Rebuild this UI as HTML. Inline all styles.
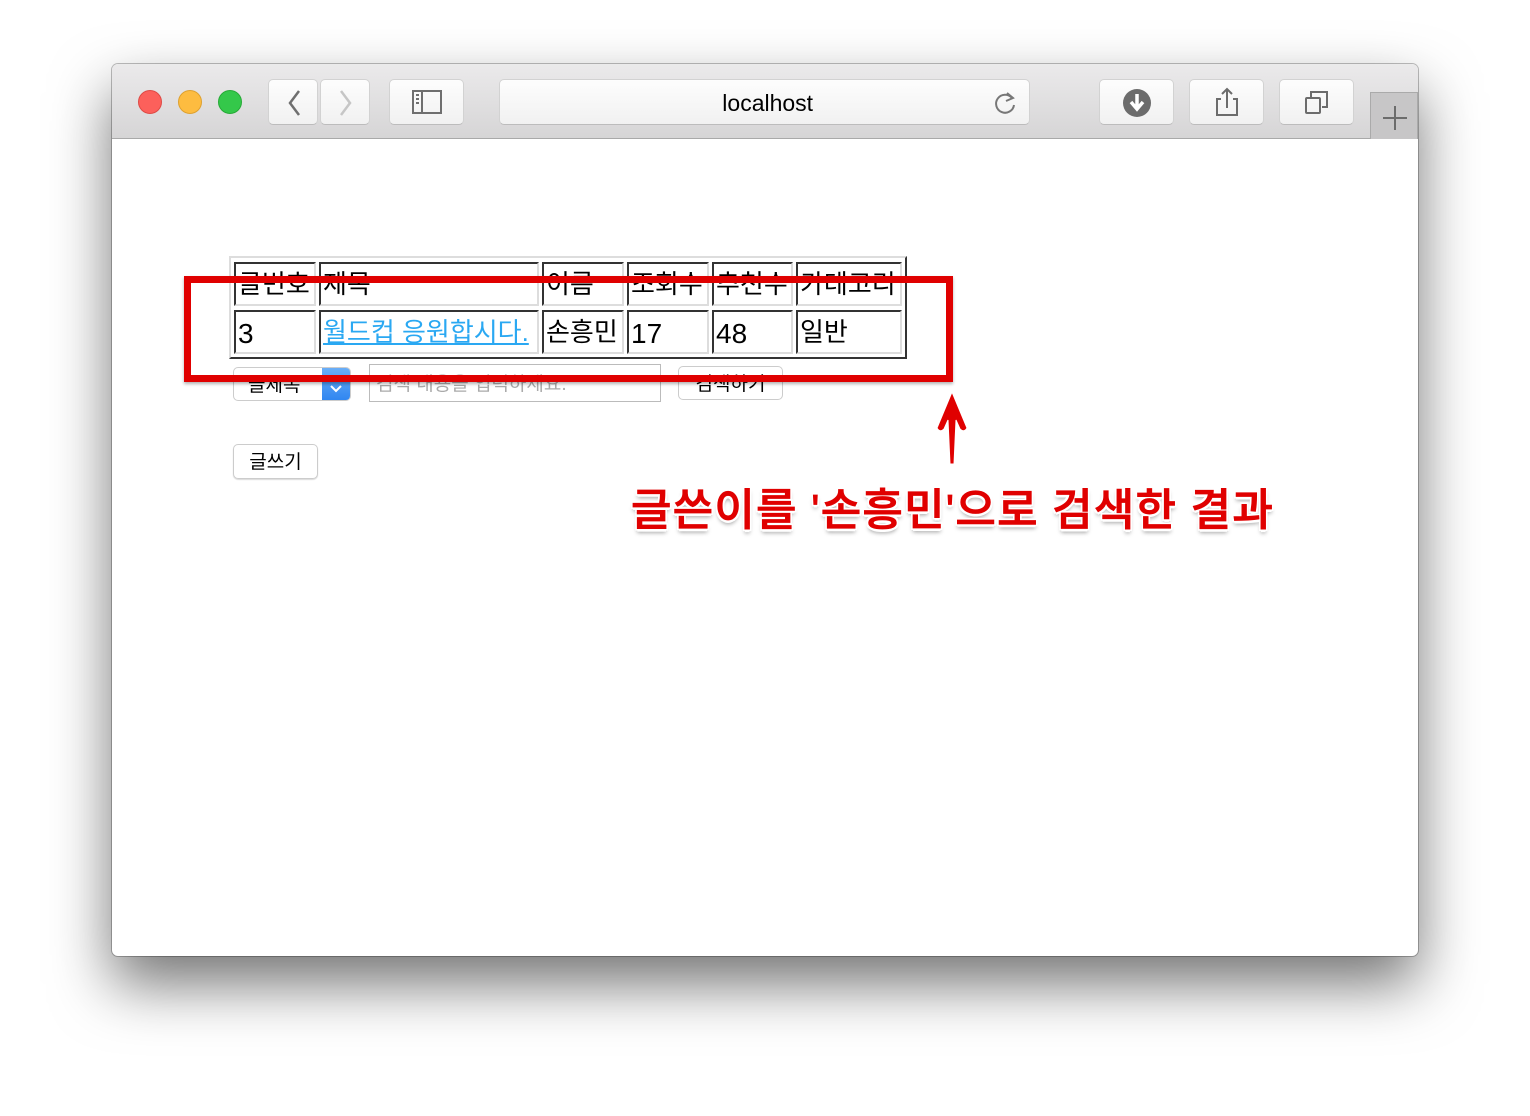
<!DOCTYPE html>
<html><head><meta charset="utf-8"><style>
*{margin:0;padding:0;box-sizing:border-box}
body{width:1530px;height:1116px;background:#fff;position:relative;overflow:hidden;font-family:"Liberation Sans","Noto Sans CJK KR",sans-serif}
.win{position:absolute;left:112px;top:64px;width:1306px;height:892px;background:#fff;border-radius:6px;box-shadow:0 28px 60px rgba(0,0,0,.55),0 0 0 1px rgba(0,0,0,.25);overflow:hidden}
.bar{position:absolute;left:0;top:0;width:100%;height:75px;background:linear-gradient(#ebeaeb,#d6d5d6);border-bottom:1px solid #a9a9a9}
.a{position:absolute}
.dot{position:absolute;top:26px;width:24px;height:24px;border-radius:50%}
.btn{position:absolute;top:15px;height:46px;background:linear-gradient(#fdfdfd,#f1f1f1);border:1px solid #d2d2d2;border-bottom-color:#bcbcbc;border-radius:5px}
.c{position:absolute;border:2px solid #333;border-right-color:#ddd;border-bottom-color:#ddd;font-size:26px;line-height:40px;padding-left:2px;color:#000;white-space:nowrap;overflow:hidden}
.c2{line-height:44px;font-size:28px}
</style></head><body>
<div class="win">
 <div class="bar">
  <div class="dot" style="left:26px;background:#fc605b;border:1px solid #de4a45"></div>
  <div class="dot" style="left:66px;background:#fdbc40;border:1px solid #dea12f"></div>
  <div class="dot" style="left:106px;background:#34c84a;border:1px solid #27aa37"></div>
  <div class="btn" style="left:156px;width:50px"><svg width="50" height="46"><path d="M30 11 L21 23 L30 35" stroke="#6f6f6f" stroke-width="2.5" fill="none"/></svg></div>
  <div class="btn" style="left:208px;width:50px"><svg width="50" height="46"><path d="M20 11 L29 23 L20 35" stroke="#c6c6c6" stroke-width="2.5" fill="none"/></svg></div>
  <div class="btn" style="left:277px;width:75px"><svg width="75" height="46"><rect x="23" y="11" width="28" height="22" stroke="#6f6f6f" stroke-width="2" fill="none"/><line x1="32" y1="11" x2="32" y2="33" stroke="#6f6f6f" stroke-width="2"/><path d="M26 15h3M26 19h3M26 23h3" stroke="#6f6f6f" stroke-width="2"/></svg></div>
  <div class="btn" style="left:387px;width:531px;font-size:23px;text-align:center;line-height:46px;color:#000">&nbsp;localhost
   <svg class="a" style="right:10px;top:9px" width="28" height="28"><path d="M21 9 A9 9 0 1 0 23 16" stroke="#777" stroke-width="2" fill="none"/><path d="M16 4 L22 9 L15 12" stroke="#777" stroke-width="2" fill="none"/></svg></div>
  <div class="btn" style="left:987px;width:75px"><svg width="75" height="46"><circle cx="37" cy="23" r="14" fill="#6c6c6c"/><path d="M37 14v14M31 22l6 7 6-7" stroke="#fff" stroke-width="3.5" fill="none"/></svg></div>
  <div class="btn" style="left:1077px;width:75px"><svg width="75" height="46"><path d="M31 19h-4v16h20v-16h-4" stroke="#6c6c6c" stroke-width="2" fill="none"/><path d="M37 28V9M32 14l5-5 5 5" stroke="#6c6c6c" stroke-width="2" fill="none"/></svg></div>
  <div class="btn" style="left:1167px;width:75px"><svg width="75" height="46"><rect x="26" y="18" width="14" height="15" stroke="#6c6c6c" stroke-width="2" fill="none" rx="1"/><path d="M31 17v-5h16v15h-5" stroke="#6c6c6c" stroke-width="2" fill="none"/></svg></div>
  <div class="a" style="left:1258px;top:28px;width:48px;height:47px;background:#c7c6c7;border:1px solid #aaa;border-bottom:none"><svg width="48" height="47"><path d="M24 13v24M12 25h24" stroke="#6c6c6c" stroke-width="2"/></svg></div>
 </div>
</div>
<!-- table -->
<div class="a" style="left:229px;top:256px;width:678px;height:103px;border:2px solid #ddd;border-right-color:#333;border-bottom-color:#333"></div>
<div class="c" style="left:234px;top:262px;width:82px;height:44px">글번호</div>
<div class="c" style="left:319px;top:262px;width:220px;height:44px">제목</div>
<div class="c" style="left:542px;top:262px;width:82px;height:44px">이름</div>
<div class="c" style="left:627px;top:262px;width:82px;height:44px">조회수</div>
<div class="c" style="left:712px;top:262px;width:81px;height:44px">추천수</div>
<div class="c" style="left:796px;top:262px;width:106px;height:44px">카테고리</div>
<div class="c c2" style="left:234px;top:310px;width:82px;height:44px">3</div>
<div class="c" style="left:319px;top:310px;width:220px;height:44px;color:#2aa8f2;text-decoration:underline">월드컵 응원합시다.</div>
<div class="c" style="left:542px;top:310px;width:82px;height:44px">손흥민</div>
<div class="c c2" style="left:627px;top:310px;width:82px;height:44px">17</div>
<div class="c c2" style="left:712px;top:310px;width:81px;height:44px">48</div>
<div class="c" style="left:796px;top:310px;width:106px;height:44px">일반</div>
<!-- form -->
<div class="a" style="left:233px;top:367px;width:118px;height:34px;border:1px solid #ccc;border-radius:5px;background:#fff;font-size:19px;line-height:36px;padding-left:14px;overflow:hidden">글제목
 <div class="a" style="right:0;top:0;width:28px;height:34px;background:linear-gradient(#6aaef7,#2d84f0)"><svg width="28" height="34"><path d="M9 18l5 5 5-5" stroke="#fff" stroke-width="2" fill="none"/></svg></div></div>
<div class="a" style="left:369px;top:364px;width:292px;height:38px;border:1px solid #bbb;font-size:19px;line-height:40px;padding-left:6px;color:#aaa">검색 내용을 입력하세요.</div>
<div class="a" style="left:678px;top:366px;width:105px;height:34px;border:1px solid #ccc;border-radius:5px;font-size:19px;line-height:36px;text-align:center">검색하기</div>
<div class="a" style="left:233px;top:444px;width:85px;height:35px;border:1px solid #ccc;border-radius:5px;font-size:19px;line-height:35px;text-align:center;box-shadow:0 1px 1px rgba(0,0,0,.15)">글쓰기</div>
<!-- annotation -->
<div class="a" style="left:184px;top:276px;width:769px;height:106px;border:7px solid #e00000;box-shadow:0 2px 3px rgba(0,0,0,.3)"></div>
<svg class="a" style="left:930px;top:388px" width="45" height="80"><path d="M22 4 L37 40 Q34 45 30 41 L26 32 L24 76 L20 76 L18 32 L14 41 Q10 45 7 40 Z" fill="#e00000" stroke="#fff" stroke-width="1"/></svg>
<div class="a" style="left:631px;top:474px;font-size:44px;font-weight:500;-webkit-text-stroke:0.8px #e00000;color:#e00000;white-space:nowrap;letter-spacing:1.2px;text-shadow:-2px -2px 0 #fff,2px -2px 0 #fff,-2px 2px 0 #fff,2px 2px 0 #fff,0 3px 0 #fff,0 4px 4px rgba(0,0,0,.4)">글쓴이를 '손흥민'으로 검색한 결과</div>
</body></html>
